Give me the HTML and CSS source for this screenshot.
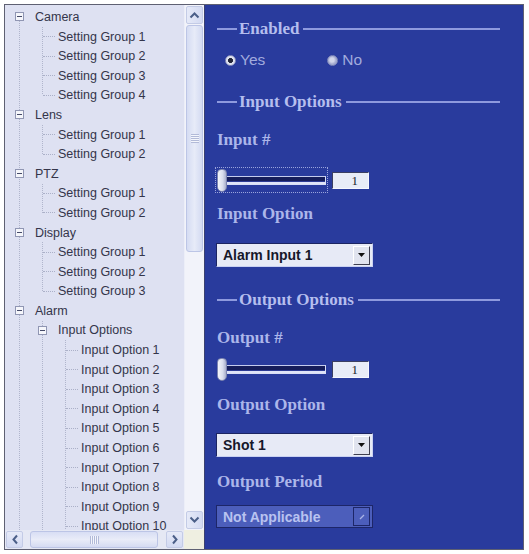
FILE: index.html
```html
<!DOCTYPE html>
<html>
<head>
<meta charset="utf-8">
<title>Settings</title>
<link rel="stylesheet" href="styles.css">
</head>
<body>
<div class="window">
  <div class="nav">
    <div class="nav-main">
      <div class="tree">
        <div class="row"><span class="cell"><span class="box"></span></span><span class="label">Camera</span></div>
        <div class="group g1">
          <div class="row l1"><span class="cell"><span class="conn"></span></span><span class="label">Setting Group 1</span></div>
          <div class="row l1"><span class="cell"><span class="conn"></span></span><span class="label">Setting Group 2</span></div>
          <div class="row l1"><span class="cell"><span class="conn"></span></span><span class="label">Setting Group 3</span></div>
          <div class="row l1"><span class="cell"><span class="conn"></span></span><span class="label">Setting Group 4</span></div>
        </div>
        <div class="row"><span class="cell"><span class="box"></span></span><span class="label">Lens</span></div>
        <div class="group g1">
          <div class="row l1"><span class="cell"><span class="conn"></span></span><span class="label">Setting Group 1</span></div>
          <div class="row l1"><span class="cell"><span class="conn"></span></span><span class="label">Setting Group 2</span></div>
        </div>
        <div class="row"><span class="cell"><span class="box"></span></span><span class="label">PTZ</span></div>
        <div class="group g1">
          <div class="row l1"><span class="cell"><span class="conn"></span></span><span class="label">Setting Group 1</span></div>
          <div class="row l1"><span class="cell"><span class="conn"></span></span><span class="label">Setting Group 2</span></div>
        </div>
        <div class="row"><span class="cell"><span class="box"></span></span><span class="label">Display</span></div>
        <div class="group g1">
          <div class="row l1"><span class="cell"><span class="conn"></span></span><span class="label">Setting Group 1</span></div>
          <div class="row l1"><span class="cell"><span class="conn"></span></span><span class="label">Setting Group 2</span></div>
          <div class="row l1"><span class="cell"><span class="conn"></span></span><span class="label">Setting Group 3</span></div>
        </div>
        <div class="row"><span class="cell"><span class="box"></span></span><span class="label">Alarm</span></div>
        <div class="group g1 open">
          <div class="row l1"><span class="cell"><span class="box"></span></span><span class="label">Input Options</span></div>
          <div class="group g2">
            <div class="row l2"><span class="cell"><span class="conn"></span></span><span class="label">Input Option 1</span></div>
            <div class="row l2"><span class="cell"><span class="conn"></span></span><span class="label">Input Option 2</span></div>
            <div class="row l2"><span class="cell"><span class="conn"></span></span><span class="label">Input Option 3</span></div>
            <div class="row l2"><span class="cell"><span class="conn"></span></span><span class="label">Input Option 4</span></div>
            <div class="row l2"><span class="cell"><span class="conn"></span></span><span class="label">Input Option 5</span></div>
            <div class="row l2"><span class="cell"><span class="conn"></span></span><span class="label">Input Option 6</span></div>
            <div class="row l2"><span class="cell"><span class="conn"></span></span><span class="label">Input Option 7</span></div>
            <div class="row l2"><span class="cell"><span class="conn"></span></span><span class="label">Input Option 8</span></div>
            <div class="row l2"><span class="cell"><span class="conn"></span></span><span class="label">Input Option 9</span></div>
            <div class="row l2"><span class="cell"><span class="conn"></span></span><span class="label">Input Option 10</span></div>
          </div>
        </div>
      </div>
      <div class="vscroll">
        <div class="sb-btn"><svg width="11" height="8" viewBox="0 0 11 8"><polyline points="1.5,6.5 5.5,2.5 9.5,6.5" fill="none" stroke="#4b5f88" stroke-width="2"/></svg></div>
        <div class="vtrack"><div class="vthumb"><span class="grip-v"></span></div></div>
        <div class="sb-btn"><svg width="11" height="8" viewBox="0 0 11 8"><polyline points="1.5,1.5 5.5,5.5 9.5,1.5" fill="none" stroke="#4b5f88" stroke-width="2"/></svg></div>
      </div>
    </div>
    <div class="nav-bottom">
      <div class="hscroll">
        <div class="sb-btn h"><svg width="8" height="11" viewBox="0 0 8 11"><polyline points="6,1.5 2.5,5.5 6,9.5" fill="none" stroke="#4b5f88" stroke-width="2"/></svg></div>
        <div class="htrack"><div class="hthumb"><span class="grip-h"></span></div></div>
        <div class="sb-btn h"><svg width="8" height="11" viewBox="0 0 8 11"><polyline points="2,1.5 5.5,5.5 2,9.5" fill="none" stroke="#4b5f88" stroke-width="2"/></svg></div>
      </div>
      <div class="corner"></div>
    </div>
  </div>

  <div class="props">
    <div class="legend m-enabled">Enabled</div>
    <div class="radios">
      <span class="radio yes"><span class="dot on"></span><span class="rtext">Yes</span></span>
      <span class="radio no"><span class="dot off"></span><span class="rtext">No</span></span>
    </div>
    <div class="legend m-input">Input Options</div>
    <div class="field-label m-inum">Input #</div>
    <div class="slider-row m-slider1">
      <div class="slider focused"><span class="knob"></span><span class="track"></span></div>
      <span class="value">1</span>
    </div>
    <div class="field-label m-iopt">Input Option</div>
    <div class="select m-sel1"><span class="sel-text">Alarm Input 1</span><span class="sel-btn"><svg width="7" height="4" viewBox="0 0 7 4"><polygon points="0,0 7,0 3.5,4" fill="#111"/></svg></span></div>
    <div class="legend m-output">Output Options</div>
    <div class="field-label m-onum">Output #</div>
    <div class="slider-row m-slider2">
      <div class="slider"><span class="knob"></span><span class="track"></span></div>
      <span class="value">1</span>
    </div>
    <div class="field-label m-oopt">Output Option</div>
    <div class="select m-sel2"><span class="sel-text">Shot 1</span><span class="sel-btn"><svg width="7" height="4" viewBox="0 0 7 4"><polygon points="0,0 7,0 3.5,4" fill="#111"/></svg></span></div>
    <div class="field-label m-oper">Output Period</div>
    <div class="select disabled m-sel3"><span class="sel-text">Not Applicable</span><span class="sel-btn"><svg width="8" height="8" viewBox="0 0 8 8"><line x1="2" y1="6" x2="6" y2="2" stroke="#aab4e6" stroke-width="1.3"/></svg></span></div>
  </div>
</div>
</body>
</html>
```

FILE: styles.css
```css
html, body {
  margin: 0;
  padding: 0;
  background: #ffffff;
}

.window {
  box-sizing: border-box;
  margin: 4px 0 0 4px;
  width: 520px;
  height: 546px;
  border: 1px solid #5e6072;
  display: flex;
}

/* ---------- left navigation tree ---------- */
.nav {
  box-sizing: border-box;
  width: 200px;
  flex: none;
  display: flex;
  flex-direction: column;
  border-right: 1px solid #3b4170;
  background: #dee1f2;
}

.nav-main {
  flex: 1;
  min-height: 0;
  display: flex;
}

.tree {
  flex: 1;
  min-width: 0;
  overflow: hidden;
  padding: 2.2px 0 0 3px;
  font-family: "Liberation Sans", Arial, sans-serif;
  font-size: 12.5px;
  color: #34354a;
  background-image: repeating-linear-gradient(to bottom, #b0b5cc 0 1px, transparent 1px 2px);
  background-repeat: no-repeat;
  background-size: 1px 100%;
  background-position: 14px 12px;
}

.row {
  height: 19.6px;
  display: flex;
  align-items: center;
  white-space: nowrap;
}
.row.l1 { padding-left: 23px; }
.row.l2 { padding-left: 46px; }

.cell {
  width: 27px;
  flex: none;
  display: flex;
  align-items: center;
}

.box {
  box-sizing: border-box;
  width: 9px;
  height: 9px;
  margin-left: 7px;
  border: 1px solid #9096b3;
  background: linear-gradient(#454a68, #454a68) center / 5px 1px no-repeat, #f5f6fb;
}

.conn {
  width: 12px;
  margin-left: 12px;
  border-top: 1px dotted #abb0c8;
}

.group {
  background-image: repeating-linear-gradient(to bottom, #b0b5cc 0 1px, transparent 1px 2px);
  background-repeat: no-repeat;
  background-size: 1px calc(100% - 9.8px);
}
.g1 { background-position: 34px 0; }
.g1.open { background-size: 1px 100%; }
.g2 { background-position: 57px 0; background-size: 1px 100%; }

/* scrollbars */
.vscroll {
  width: 20px;
  flex: none;
  display: flex;
  flex-direction: column;
  background: #f2f3fa;
  border-left: 1px solid #eceef8;
  box-sizing: border-box;
}

.sb-btn {
  box-sizing: border-box;
  height: 18px;
  margin: 1px;
  border: 1px solid #c3cbe6;
  border-radius: 2px;
  background: linear-gradient(to right, #e6eaf8, #d3daf2);
  display: flex;
  align-items: center;
  justify-content: center;
  flex: none;
}
.sb-btn.h {
  width: 17px;
  height: auto;
  background: linear-gradient(to bottom, #e6eaf8, #d3daf2);
}

.vtrack {
  flex: 1;
  display: flex;
  flex-direction: column;
  padding: 0 1px;
}

.vthumb {
  box-sizing: border-box;
  height: 227px;
  border: 1px solid #bcc5e6;
  border-radius: 3px;
  background: linear-gradient(to right, #d5dcf3, #e7ebf8 50%, #d3daf2);
  display: flex;
  align-items: center;
  justify-content: center;
}

.grip-v {
  width: 8px;
  height: 9px;
  background: repeating-linear-gradient(to bottom, #b2bad8 0 1px, #f4f6fc 1px 2px);
}

.nav-bottom {
  height: 19px;
  flex: none;
  display: flex;
}

.hscroll {
  flex: 1;
  display: flex;
  background: #e5e8f4;
}

.htrack {
  flex: 1;
  display: flex;
  padding: 1px 0;
}

.hthumb {
  box-sizing: border-box;
  width: 128px;
  margin-left: 6px;
  border: 1px solid #bcc5e6;
  border-radius: 3px;
  background: linear-gradient(to bottom, #d8def4, #e9ecf8 50%, #d5dbf2);
  display: flex;
  align-items: center;
  justify-content: center;
}

.grip-h {
  width: 9px;
  height: 8px;
  background: repeating-linear-gradient(to right, #b2bad8 0 1px, #f4f6fc 1px 2px);
}

.corner {
  width: 20px;
  flex: none;
  background: #efefe1;
}

/* ---------- right property panel ---------- */
.props {
  flex: 1;
  min-width: 0;
  background: #293b9d;
  padding: 0 23px 0 12px;
  display: flex;
  flex-direction: column;
}

.legend {
  height: 20px;
  display: flex;
  align-items: center;
  font-family: "Liberation Serif", "Times New Roman", serif;
  font-weight: bold;
  font-size: 17px;
  color: #b5beee;
  white-space: nowrap;
}
.legend::before {
  content: "";
  width: 20px;
  height: 2px;
  margin-right: 2px;
  background: #8e9ade;
}
.legend::after {
  content: "";
  flex: 1;
  height: 2px;
  margin-left: 4px;
  background: #8e9ade;
}

.field-label {
  height: 20px;
  line-height: 20px;
  font-family: "Liberation Serif", "Times New Roman", serif;
  font-weight: bold;
  font-size: 17px;
  color: #acb6ea;
}

.radios {
  height: 16px;
  display: flex;
  align-items: center;
  font-family: "Liberation Sans", Arial, sans-serif;
  font-size: 15.5px;
  color: #a2abdd;
}

.radio {
  display: flex;
  align-items: center;
  gap: 4px;
}
.radio.yes { margin-left: 8px; }
.radio.no { margin-left: 62px; }

.dot {
  box-sizing: border-box;
  width: 11px;
  height: 11px;
  border-radius: 50%;
}
.dot.on {
  border: 1px solid #8a92bf;
  background: radial-gradient(circle, #22253a 0 2.2px, #dfe2f0 2.8px);
}
.dot.off {
  border: 1px solid #7f88bb;
  background: radial-gradient(circle at 45% 45%, #d2d6ea 0 2px, #a4abd0 4px);
}

.slider-row {
  height: 26px;
  display: flex;
  align-items: center;
}

.slider {
  box-sizing: border-box;
  width: 113px;
  height: 26px;
  margin-left: -2px;
  padding: 0 1px;
  border: 1px dotted transparent;
  display: flex;
  align-items: center;
}
.slider.focused {
  border-color: #9aa4dc;
}

.knob {
  box-sizing: border-box;
  width: 10px;
  height: 23px;
  flex: none;
  border-radius: 4px 4px 5px 5px;
  border: 1px solid #7c84b0;
  background: linear-gradient(to right, #f4f5fb, #d8dcec 60%, #a9afcc);
  position: relative;
  z-index: 1;
}

.track {
  box-sizing: border-box;
  flex: 1;
  height: 9px;
  margin-left: -3px;
  border: 1px solid #d8def6;
  border-top-color: #c4cbee;
  background: linear-gradient(to bottom, #161d5a 0 55%, #2c3a94 55% 75%, #dfe4f8 75%);
}

.value {
  box-sizing: border-box;
  width: 37px;
  height: 17px;
  margin-left: 4px;
  border: 1px solid;
  border-color: #3b3f62 #f6f7ff #f6f7ff #3b3f62;
  background: #e8ecf7;
  font-family: "Liberation Serif", "Times New Roman", serif;
  font-size: 13px;
  line-height: 15px;
  color: #1d1d2c;
  text-align: right;
  padding-right: 10px;
}

.select {
  box-sizing: border-box;
  width: 157px;
  height: 24px;
  margin-left: -1px;
  border: 1px solid;
  border-color: #1b2462 #c9d1f2 #c9d1f2 #1b2462;
  background: #e7eaf6;
  display: flex;
  align-items: center;
}

.sel-text {
  flex: 1;
  padding-left: 6px;
  font-family: "Liberation Sans", Arial, sans-serif;
  font-weight: bold;
  font-size: 14px;
  color: #16172a;
  white-space: nowrap;
}

.sel-btn {
  box-sizing: border-box;
  width: 17px;
  height: 19px;
  margin-right: 2px;
  border: 1px solid;
  border-color: #ffffff #3e3f50 #3e3f50 #ffffff;
  background: #e1e4ef;
  display: flex;
  align-items: center;
  justify-content: center;
}

.select.disabled {
  height: 23px;
  border-color: #1d2668;
  background: #4c5ebb;
}
.select.disabled .sel-text {
  color: #b9c3f0;
}
.select.disabled .sel-btn {
  border-color: #1d2668;
  background: #4c5ebb;
}

/* vertical rhythm of the property panel */
.m-enabled { margin-top: 14px; }
.radios { margin-top: 13px; }
.m-input { margin-top: 24px; }
.m-inum { margin-top: 18px; }
.m-slider1 { margin-top: 17px; }
.m-iopt { margin-top: 11px; }
.m-sel1 { margin-top: 19px; }
.m-output { margin-top: 23px; }
.m-onum { margin-top: 18px; }
.m-slider2 { margin-top: 8px; }
.m-oopt { margin-top: 13px; }
.m-sel2 { margin-top: 18px; }
.m-oper { margin-top: 15px; }
.m-sel3 { margin-top: 13px; }
```
